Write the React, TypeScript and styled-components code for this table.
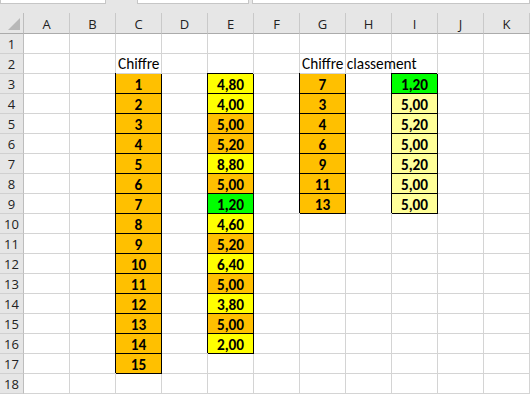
import styled, { createGlobalStyle } from "styled-components";

const COLS = ["A", "B", "C", "D", "E", "F", "G", "H", "I", "J", "K"];
const ROWS = Array.from({ length: 18 }, (_, i) => i + 1);

const ORANGE = "#ffc000";
const YELLOW = "#ffff00";
const GREEN = "#00ff00";
const PALE = "#ffff99";

type CellData = { text: string; fill?: string; label?: boolean };

const chiffres = ["1", "2", "3", "4", "5", "6", "7", "8", "9", "10", "11", "12", "13", "14", "15"];
const valeurs: [string, string][] = [
  ["4,80", YELLOW],
  ["4,00", YELLOW],
  ["5,00", ORANGE],
  ["5,20", ORANGE],
  ["8,80", YELLOW],
  ["5,00", ORANGE],
  ["1,20", GREEN],
  ["4,60", YELLOW],
  ["5,20", ORANGE],
  ["6,40", YELLOW],
  ["5,00", ORANGE],
  ["3,80", YELLOW],
  ["5,00", ORANGE],
  ["2,00", YELLOW],
];
const classement = ["7", "3", "4", "6", "9", "11", "13"];
const classementVal: [string, string][] = [
  ["1,20", GREEN],
  ["5,00", PALE],
  ["5,20", PALE],
  ["5,00", PALE],
  ["5,20", PALE],
  ["5,00", PALE],
  ["5,00", PALE],
];

const cells: Record<string, CellData> = {
  C2: { text: "Chiffre", label: true },
  G2: { text: "Chiffre classement", label: true },
};
chiffres.forEach((c, i) => (cells["C" + (i + 3)] = { text: c, fill: ORANGE }));
valeurs.forEach(([v, f], i) => (cells["E" + (i + 3)] = { text: v, fill: f }));
classement.forEach((c, i) => (cells["G" + (i + 3)] = { text: c, fill: ORANGE }));
classementVal.forEach(([v, f], i) => (cells["I" + (i + 3)] = { text: v, fill: f }));

function App() {
  return (
    <Window>
      <GlobalStyle />
      <FormulaStrip>
        <StripBox $width={104} />
        <StripGap $width={31} />
        <StripBox $width={110} />
        <StripGap $width={3} />
        <StripBox $grow />
      </FormulaStrip>
      <Sheet>
        <Corner>
          <svg width="12" height="12" viewBox="0 0 12 12">
            <polygon points="12,0 12,12 0,12" fill="#b8b8b8" />
          </svg>
        </Corner>
        {COLS.map((c) => (
          <ColHead key={c}>{c}</ColHead>
        ))}
        {ROWS.map((r) => [
          <RowHead key={"r" + r}>{r}</RowHead>,
          ...COLS.map((c) => {
            const d = cells[c + r];
            if (!d) return <Cell key={c + r} />;
            if (d.label) return <LabelCell key={c + r}>{d.text}</LabelCell>;
            return (
              <FilledCell key={c + r} $fill={d.fill!}>
                {d.text}
              </FilledCell>
            );
          }),
        ])}
      </Sheet>
    </Window>
  );
}

const GlobalStyle = createGlobalStyle`
  html, body {
    margin: 0;
    padding: 0;
    background: #ffffff;
  }
`;

const Window = styled.div`
  width: 530px;
  height: 395px;
  overflow: hidden;
  background: #ffffff;
`;

const FormulaStrip = styled.div`
  height: 13px;
  display: flex;
  flex-direction: row;
  background: #e6e6e6;
`;

const StripBox = styled.div<{ $width?: number; $grow?: boolean }>`
  width: ${(p) => (p.$width ? `${p.$width}px` : "auto")};
  flex: ${(p) => (p.$grow ? 1 : "none")};
  height: 3px;
  background: #ffffff;
  border: 1px solid #c6c6c6;
  border-top: none;
`;

const StripGap = styled.div<{ $width: number }>`
  width: ${(p) => p.$width}px;
  flex: none;
`;

const Sheet = styled.div`
  display: grid;
  grid-template-columns: 24px repeat(11, 46px);
  grid-template-rows: 21px;
  grid-auto-rows: 20px;
  font-family: Calibri, Carlito, Lato, "Liberation Sans", sans-serif;
`;

const HeadBase = styled.div`
  box-sizing: border-box;
  background: #e6e6e6;
  color: #222222;
  font-family: "Segoe UI", "Open Sans", "Noto Sans", sans-serif;
  font-size: 13px;
  display: flex;
  align-items: center;
  justify-content: center;
`;

const Corner = styled(HeadBase)`
  border-right: 1px solid #bdbdbd;
  border-bottom: 1px solid #ababab;
  align-items: flex-end;
  justify-content: flex-end;
  padding: 0 3px 3px 0;
`;

const ColHead = styled(HeadBase)`
  border-right: 1px solid #c9c9c9;
  border-bottom: 1px solid #ababab;
  padding-top: 1px;
`;

const RowHead = styled(HeadBase)`
  border-right: 1px solid #bdbdbd;
  border-bottom: 1px solid #d0d0d0;
  padding-top: 1px;
`;

const Cell = styled.div`
  box-sizing: border-box;
  background: #ffffff;
  border-right: 1px solid #d4d4d4;
  border-bottom: 1px solid #d4d4d4;
`;

const LabelCell = styled(Cell)`
  position: relative;
  z-index: 1;
  background: transparent;
  white-space: nowrap;
  overflow: visible;
  font-size: 15.3px;
  color: #000000;
  padding: 0 0 0 2px;
  line-height: 19px;
`;

const FilledCell = styled(Cell)<{ $fill: string }>`
  background: ${(p) => p.$fill};
  border-right-color: #000000;
  border-bottom-color: #000000;
  box-shadow: -1px -1px 0 0 #000000;
  font-size: 15.3px;
  font-weight: 700;
  color: #000000;
  display: flex;
  align-items: center;
  justify-content: center;
  padding-top: 1px;
`;

export default App;
